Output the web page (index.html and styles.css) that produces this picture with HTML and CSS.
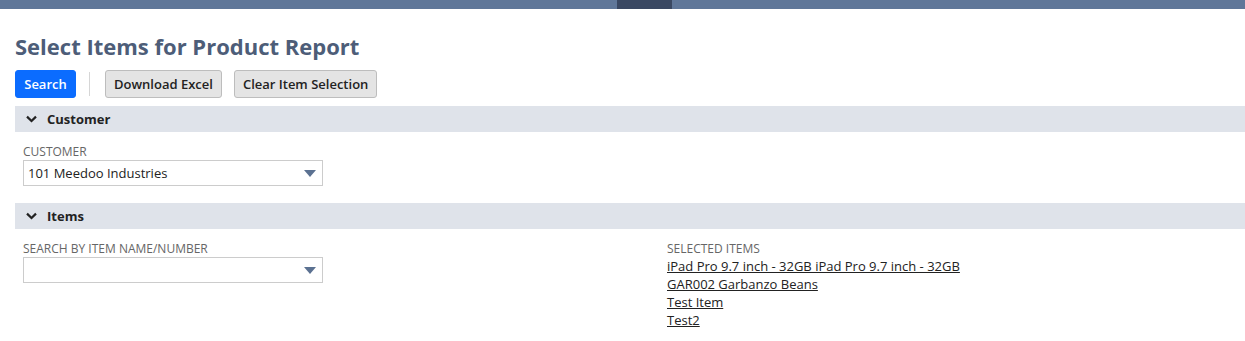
FILE: index.html
```html
<!DOCTYPE html>
<html>
<head>
<meta charset="utf-8">
<link rel="stylesheet" href="styles.css">
</head>
<body>
<div class="topbar"><div class="topbar-active"></div></div>
<div class="page">
  <h1 class="title">Select Items for Product Report</h1>
  <div class="toolbar">
    <button class="btn btn-primary">Search</button>
    <span class="sep"></span>
    <button class="btn">Download Excel</button>
    <button class="btn">Clear Item Selection</button>
  </div>
  <div class="section-head">
    <svg class="chev" width="11" height="8" viewBox="0 0 11 8"><path d="M1 1.6 L5.5 6 L10 1.6" fill="none" stroke="#222" stroke-width="2.2"/></svg>
    <span>Customer</span>
  </div>
  <div class="section-body">
    <div class="field">
      <div class="label">CUSTOMER</div>
      <div class="select"><span>101 Meedoo Industries</span><span class="arrow"></span></div>
    </div>
  </div>
  <div class="section-head">
    <svg class="chev" width="11" height="8" viewBox="0 0 11 8"><path d="M1 1.6 L5.5 6 L10 1.6" fill="none" stroke="#222" stroke-width="2.2"/></svg>
    <span>Items</span>
  </div>
  <div class="section-body items">
    <div class="field">
      <div class="label">SEARCH BY ITEM NAME/NUMBER</div>
      <div class="select"><span></span><span class="arrow"></span></div>
    </div>
    <div class="selected">
      <div class="label">SELECTED ITEMS</div>
      <a href="#">iPad Pro 9.7 inch - 32GB iPad Pro 9.7 inch - 32GB</a>
      <a href="#">GAR002 Garbanzo Beans</a>
      <a href="#">Test Item</a>
      <a href="#">Test2</a>
    </div>
  </div>
</div>
</body>
</html>
```
FILE: styles.css
```css
html, body { margin: 0; padding: 0; background: #fff; }
body { font-family: "Open Sans", "Liberation Sans", sans-serif; color: #222; }
.topbar { height: 9px; background: #607799; position: relative; }
.topbar-active { position: absolute; left: 617px; width: 55px; top: 0; height: 9px; background: #3a4862; }
.page { padding: 0 0 0 15px; }
.title { margin: 0; padding-top: 24px; font-size: 22px; line-height: 26px; font-weight: 700; color: #4d5d78; }
.toolbar { display: flex; align-items: center; margin-top: 11px; height: 28px; }
.btn { font-family: "Open Sans", "Liberation Sans", sans-serif; font-size: 13px; height: 28px; padding: 0 8px; border: 1px solid #bdbdbd; background: #e4e4e4; color: #222; border-radius: 3px; margin-right: 12px; cursor: pointer; font-weight: 600; }
.btn-primary { background: #0b6cff; border-color: #0b6cff; color: #fff; width: 61px; margin-right: 0; }
.sep { width: 1px; height: 24px; background: #d6d6d6; margin: 0 15px 0 13px; }
.section-head { margin-top: 8px; height: 26px; background: #dfe3ea; display: flex; align-items: center; font-size: 13px; font-weight: 700; color: #222; }
.chev { margin: 0 10px 0 11px; }
.section-body { padding: 12px 0 9px 8px; }
.label { font-size: 12px; line-height: 16px; color: #666; }
.select { height: 24px; border: 1px solid #ccc; display: flex; align-items: center; justify-content: space-between; font-size: 13px; padding: 0 0 0 4px; box-sizing: content-box; width: 294px; }
.arrow { width: 0; height: 0; border-left: 6px solid transparent; border-right: 6px solid transparent; border-top: 7px solid #5b7191; margin-right: 6px; }
.items { display: flex; }
.items .field { width: 644px; }
.selected { display: flex; flex-direction: column; }
.selected a { font-size: 13px; line-height: 18px; color: #222; text-decoration: underline; }
```
